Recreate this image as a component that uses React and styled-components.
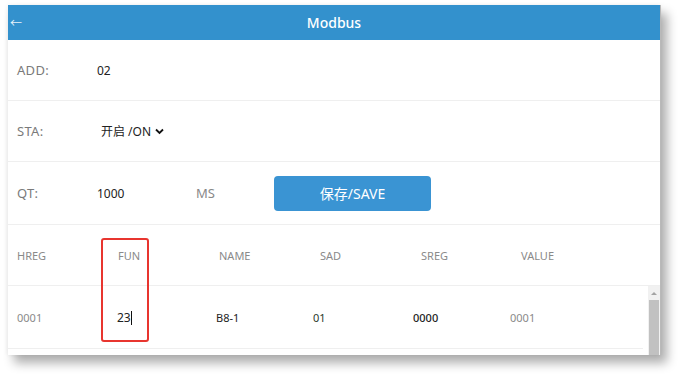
import React from "react";
import styled, { createGlobalStyle } from "styled-components";

const GlobalStyle = createGlobalStyle`
  html, body {
    margin: 0;
    padding: 0;
    background: #ffffff;
  }
  body {
    font-family: "Noto Sans", "Noto Sans CJK SC", sans-serif;
  }
`;

const Stage = styled.div`
  width: 679px;
  height: 375px;
  padding: 5px 0 0 8px;
  box-sizing: border-box;
  overflow: hidden;
`;

const Window = styled.div`
  position: relative;
  width: 653px;
  height: 350px;
  background: #fff;
  overflow: hidden;
  box-shadow: 6px 8px 10px rgba(0, 0, 0, 0.32), -1px 0 4px rgba(0, 0, 0, 0.06);
  border-right: 1px solid #b9b9b9;
  box-sizing: border-box;
  display: flex;
  flex-direction: column;
`;

const TitleBar = styled.div`
  height: 35px;
  flex: none;
  background: #3391cd;
  display: flex;
  align-items: center;
  justify-content: center;
  position: relative;
  color: #fff;
  font-size: 14px;
  font-weight: 500;
`;

const Back = styled.span`
  position: absolute;
  left: 2px;
  top: 9px;
  font-size: 12px;
  color: #e6f2fb;
  font-weight: 400;
`;

const FormRow = styled.div`
  height: ${(p) => p.$h}px;
  flex: none;
  display: flex;
  align-items: center;
  padding-left: 9px;
  border-bottom: 1px solid #efefef;
  box-sizing: border-box;
  font-size: 13px;
`;

const Label = styled.span`
  width: 80px;
  color: #7a7a7a;
  letter-spacing: 0.3px;
`;

const Value = styled.span`
  color: #222;
  font-size: 12px;
  width: ${(p) => p.$w || "auto"};
`;

const Select = styled.span`
  display: inline-flex;
  align-items: center;
  gap: 4px;
  margin-left: 4px;
  color: #222;
  font-size: 12px;
`;

const Unit = styled.span`
  color: #888;
  font-size: 13px;
  width: 78px;
`;

const SaveButton = styled.button`
  width: 157px;
  height: 35px;
  border: none;
  border-radius: 4px;
  background: #3a94d3;
  color: #fff;
  font-family: inherit;
  font-size: 14px;
  font-weight: 400;
  padding: 0;
`;

const TableHead = styled.div`
  height: 60px;
  flex: none;
  display: grid;
  grid-template-columns: 101px 101px 101px 101px 100px 100px;
  align-items: center;
  padding-left: 9px;
  border-bottom: 1px solid #efefef;
  font-size: 11px;
  color: #8a8a8a;
`;

const HeadCell = styled.span``;

const BodyArea = styled.div`
  flex: 1;
  display: flex;
  min-height: 0;
`;

const BodyRows = styled.div`
  flex: 1;
`;

const DataRow = styled.div`
  height: 62px;
  display: grid;
  grid-template-columns: 100px 99px 97px 100px 97px 100px;
  align-items: center;
  padding-left: 9px;
  border-bottom: 1px solid #efefef;
  margin-right: 5px;
  font-size: 11px;
`;

const Cell = styled.span`
  color: ${(p) => p.$color || "#222"};
  font-weight: ${(p) => (p.$bold ? 500 : 400)};
  font-size: ${(p) => p.$size || 11}px;
`;

const Caret = styled.span`
  display: inline-block;
  width: 1px;
  height: 14px;
  background: #111;
  vertical-align: -3px;
`;

const Scrollbar = styled.div`
  width: 12px;
  flex: none;
  background: #f1f1f1;
  display: flex;
  flex-direction: column;
  align-items: center;
`;

const ArrowUp = styled.div`
  height: 14px;
  display: flex;
  align-items: center;
  justify-content: center;
  &::before {
    content: "";
    border-left: 3px solid transparent;
    border-right: 3px solid transparent;
    border-bottom: 3px solid #a3a3a3;
  }
`;

const Thumb = styled.div`
  flex: 1;
  width: 10px;
  background: #c1c1c1;
`;

const Highlight = styled.div`
  position: absolute;
  left: 93px;
  top: 233px;
  width: 44px;
  height: 100px;
  border: 2px solid #e8352f;
  border-radius: 3px;
  pointer-events: none;
`;

export default function App() {
  return (
    <>
      <GlobalStyle />
      <Stage>
        <Window>
          <TitleBar>
            <Back>←</Back>
            Modbus
          </TitleBar>
          <FormRow $h={61}>
            <Label>ADD:</Label>
            <Value>02</Value>
          </FormRow>
          <FormRow $h={61}>
            <Label>STA:</Label>
            <Select>
              开启 /ON
              <svg width="9" height="7" viewBox="0 0 9 7">
                <path d="M1 1.5 L4.5 5 L8 1.5" fill="none" stroke="#111" strokeWidth="1.8" />
              </svg>
            </Select>
          </FormRow>
          <FormRow $h={63}>
            <Label>QT:</Label>
            <Value $w="99px">1000</Value>
            <Unit>MS</Unit>
            <SaveButton>保存/SAVE</SaveButton>
          </FormRow>
          <TableHead>
            <HeadCell>HREG</HeadCell>
            <HeadCell>FUN</HeadCell>
            <HeadCell>NAME</HeadCell>
            <HeadCell>SAD</HeadCell>
            <HeadCell>SREG</HeadCell>
            <HeadCell>VALUE</HeadCell>
          </TableHead>
          <BodyArea>
            <BodyRows>
              <DataRow>
                <Cell $color="#8a8a8a">0001</Cell>
                <Cell $size={12}>
                  23<Caret />
                </Cell>
                <Cell>B8-1</Cell>
                <Cell $color="#2b3a2b">01</Cell>
                <Cell $bold>0000</Cell>
                <Cell $color="#8a8a8a">0001</Cell>
              </DataRow>
            </BodyRows>
            <Scrollbar>
              <ArrowUp />
              <Thumb />
            </Scrollbar>
          </BodyArea>
          <Highlight />
        </Window>
      </Stage>
    </>
  );
}
